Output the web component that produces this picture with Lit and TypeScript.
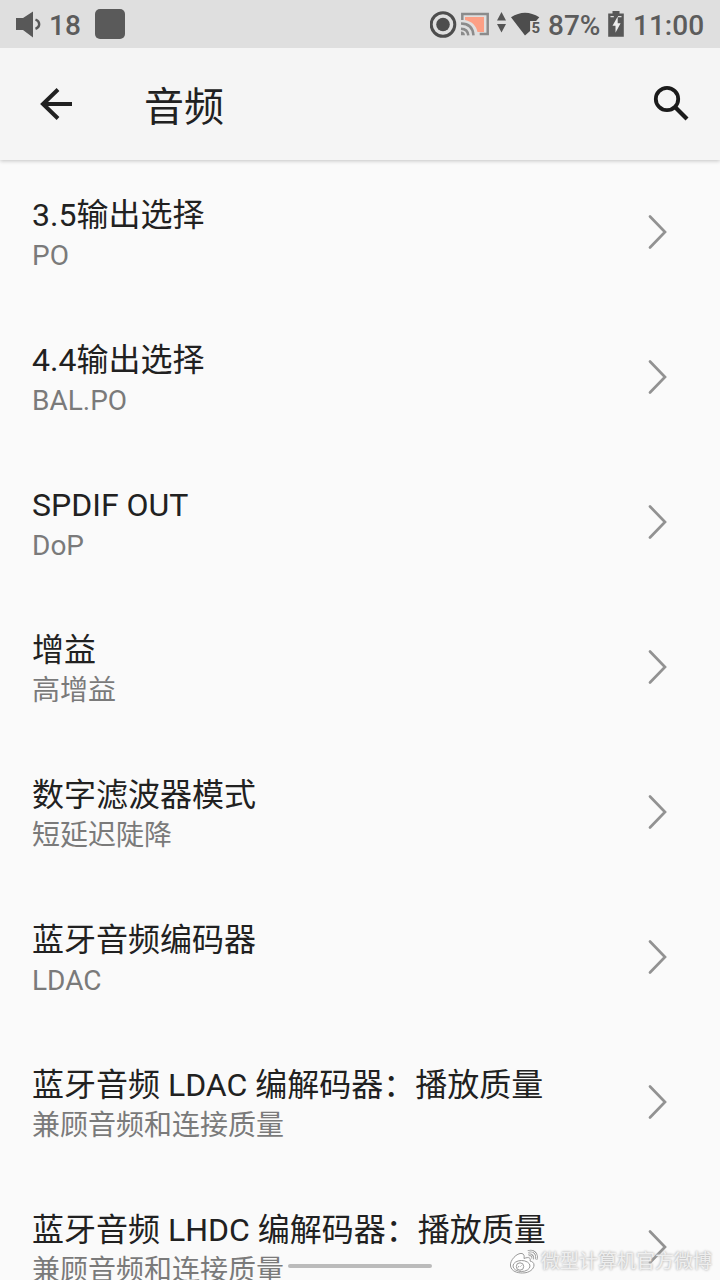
import { LitElement, html, css } from "lit";
import { customElement } from "lit/decorators.js";

interface Setting {
  title: string;
  summary: string;
}

const SETTINGS: Setting[] = [
  { title: "3.5输出选择", summary: "PO" },
  { title: "4.4输出选择", summary: "BAL.PO" },
  { title: "SPDIF OUT", summary: "DoP" },
  { title: "增益", summary: "高增益" },
  { title: "数字滤波器模式", summary: "短延迟陡降" },
  { title: "蓝牙音频编码器", summary: "LDAC" },
  { title: "蓝牙音频 LDAC 编解码器：播放质量", summary: "兼顾音频和连接质量" },
  { title: "蓝牙音频 LHDC 编解码器：播放质量", summary: "兼顾音频和连接质量" },
];

@customElement("status-bar")
class StatusBar extends LitElement {
  static styles = css`
    :host {
      display: flex;
      justify-content: space-between;
      position: relative;
      z-index: 2;
      height: 48px;
      box-sizing: border-box;
      padding: 0 17px 0 16px;
      background: #dfdfdf;
      color: #5c5c5c;
      font-size: 28px;
      font-weight: 500;
      line-height: 52px;
    }
    .group { display: flex; }
    .text { white-space: nowrap; }
    .volume { margin-left: 7px; }
    .app { width: 30px; height: 30px; margin: 9px 0 0 14px; border-radius: 5px; background: #5a5a5a; }
    .icons { display: block; width: 118px; height: 48px; }
    .battery { display: block; width: 33px; height: 48px; }
    .speaker { display: block; width: 26px; height: 48px; }
    .percent { width: 52px; }
    .clock { width: 70px; }
  `;
  render() {
    return html`
      <div class="group">
        <svg class="speaker" viewBox="16 0 26 48">
          <path d="M16 18h7l10-6.5v26L23 30h-7z" fill="#585858" />
          <path d="M35.5 19.5q3.7 1.5 3.7 4.7t-3.7 4.7" fill="none" stroke="#585858" stroke-width="2.4" />
        </svg>
        <span class="text volume">18</span>
        <div class="app"></div>
      </div>
      <div class="group">
        <svg class="icons" viewBox="430 0 118 48">
          <circle cx="443" cy="24.5" r="11.8" fill="none" stroke="#4d4d4d" stroke-width="3" />
          <circle cx="443" cy="24.5" r="6.8" fill="#4d4d4d" />
          <path d="M465 17h19v15h-6.5c-1.2-6-5.2-10.5-12.5-12z" fill="#fc9f85" />
          <path d="M462.3 20v-6.1h25.4v20.2h-8" fill="none" stroke="#8b8b8b" stroke-width="2.5" />
          <path d="M461 23.5q11.500 0 12.500 11.800M461 28.700q6.800.3 7.300 6.600" fill="none" stroke="#8b8b8b" stroke-width="2.5" />
          <path d="M461 31.6q3.700 0 3.900 3.700H461z" fill="#8b8b8b" />
          <path d="M497 20.500l4.500-8.500 4.500 8.500zM497 24h9l-4.500 8.500z" fill="#555" />
          <path d="M511 17.3q14-9.200 28.300 0l-3.200 3.700h-6v10L525 35.500z" fill="#4d4d4d" />
          <text x="531.500" y="33" font-size="15" font-weight="700" fill="#585858">5</text>
        </svg>
        <span class="text percent">87%</span>
        <svg class="battery" viewBox="600 0 33 48">
          <path d="M612.5 11h7v2.5h4.3v23.3h-15.6V13.5h4.3z" fill="#585858" />
          <path d="M610.5 16.6h3.3M618 16.6h3.5" stroke="#dfdfdf" stroke-width="1.2" />
          <path d="M617.7 16.5l-5.2 9.3h3v6.9l5.1-9.4h-2.9z" fill="#eee" />
        </svg>
        <span class="text clock">11:00</span>
      </div>
    `;
  }
}

@customElement("setting-row")
class SettingRow extends LitElement {
  static properties = { item: { attribute: false } };
  declare item: Setting;
  static styles = css`
    :host {
      display: flex;
      justify-content: space-between;
      flex: none;
      height: 145px;
      box-sizing: border-box;
      padding: 35px 50px 0 32px;
    }
    .title { color: #212121; font-size: 32px; line-height: 40px; white-space: nowrap; }
    .summary { color: #7a7a7a; font-size: 28px; line-height: 42px; white-space: nowrap; }
    .chevron { display: block; flex: none; width: 24px; height: 40px; margin-top: 17px; }
  `;
  render() {
    return html`
      <div>
        <div class="title">${this.item.title}</div>
        <div class="summary">${this.item.summary}</div>
      </div>
      <svg class="chevron" viewBox="0 0 24 40">
        <path d="M4 4.5L19 20 4 35.5" fill="none" stroke="#929292" stroke-width="2.7" stroke-linecap="round" />
      </svg>
    `;
  }
}

@customElement("app-root")
class AppRoot extends LitElement {
  static styles = css`
    :host {
      display: flex;
      flex-direction: column;
      position: relative;
      width: 720px;
      height: 1280px;
      overflow: hidden;
      background: #fafafa;
      font-family: Roboto, "Noto Sans CJK SC", sans-serif;
    }
    .bar {
      display: flex;
      align-items: center;
      flex: none;
      height: 112px;
      box-sizing: border-box;
      padding: 0 24px 0 32px;
      background: #f5f5f5;
      box-shadow: 0 1px 4px rgba(0, 0, 0, 0.22);
      z-index: 1;
    }
    .back, .search { display: block; width: 48px; height: 48px; }
    .heading { flex: 1; margin: 0 0 0 64px; padding-top: 7px; color: #212121; font-size: 40px; font-weight: 400; line-height: 48px; }
    .list { display: flex; flex-direction: column; flex: 1; min-height: 0; overflow: hidden; }
    .handle { position: absolute; left: 288px; bottom: 12px; width: 144px; height: 4px; border-radius: 2px; background: #bbb; }
    .mark {
      position: absolute;
      right: 8px;
      bottom: 4px;
      display: flex;
      align-items: center;
      gap: 3px;
      color: rgba(250, 250, 250, 0.8);
      font-size: 19px;
      line-height: 28px;
      white-space: nowrap;
      text-shadow: 0 0 2px #bbb, 0 0 3px #bbb;
    }
    .weibo { display: block; width: 29px; height: 26px; }
  `;
  render() {
    return html`
      <status-bar></status-bar>
      <header class="bar">
        <svg class="back" viewBox="32 80 48 48">
          <path d="M72 104H43M58 89.5L43 104l15 14.5" fill="none" stroke="#212121" stroke-width="4" />
        </svg>
        <h1 class="heading">音频</h1>
        <svg class="search" viewBox="648 80 48 48">
          <circle cx="667" cy="99" r="11.2" fill="none" stroke="#1b1b1b" stroke-width="3.8" />
          <path d="M675 107l12 12" stroke="#1b1b1b" stroke-width="4.2" />
        </svg>
      </header>
      <main class="list">${SETTINGS.map((item) => html`<setting-row .item=${item}></setting-row>`)}</main>
      <div class="handle"></div>
      <div class="mark">
        <svg class="weibo" viewBox="508 1247 29 26" fill="none" stroke="#999" stroke-width="1">
          <path d="M521 1251.5c-5-1-12.5 7-11.5 12.5 1 5.5 7 7 12 7 7 0 11.5-4 11.5-8 0-2.5-2-3.5-4-4 1-3-1-4.5-6-2.5 .5-2.5 0-4.5-2-5z" fill="#fff" />
          <ellipse cx="520.5" cy="1264" rx="8.5" ry="5.5" />
          <circle cx="519" cy="1264.5" r="3.7" />
          <path d="M517 1265.5l1-1.5M519.5 1264.5l1-1" />
          <path d="M527 1249.5c6-2 10 3 8 8M527.5 1253c3-1 5 1.5 4 4" stroke-width="2.6" />
          <path d="M527 1249.5c6-2 10 3 8 8M527.5 1253c3-1 5 1.5 4 4" stroke="#fff" stroke-width="1" />
        </svg>
        <span>微型计算机官方微博</span>
      </div>
    `;
  }
}
